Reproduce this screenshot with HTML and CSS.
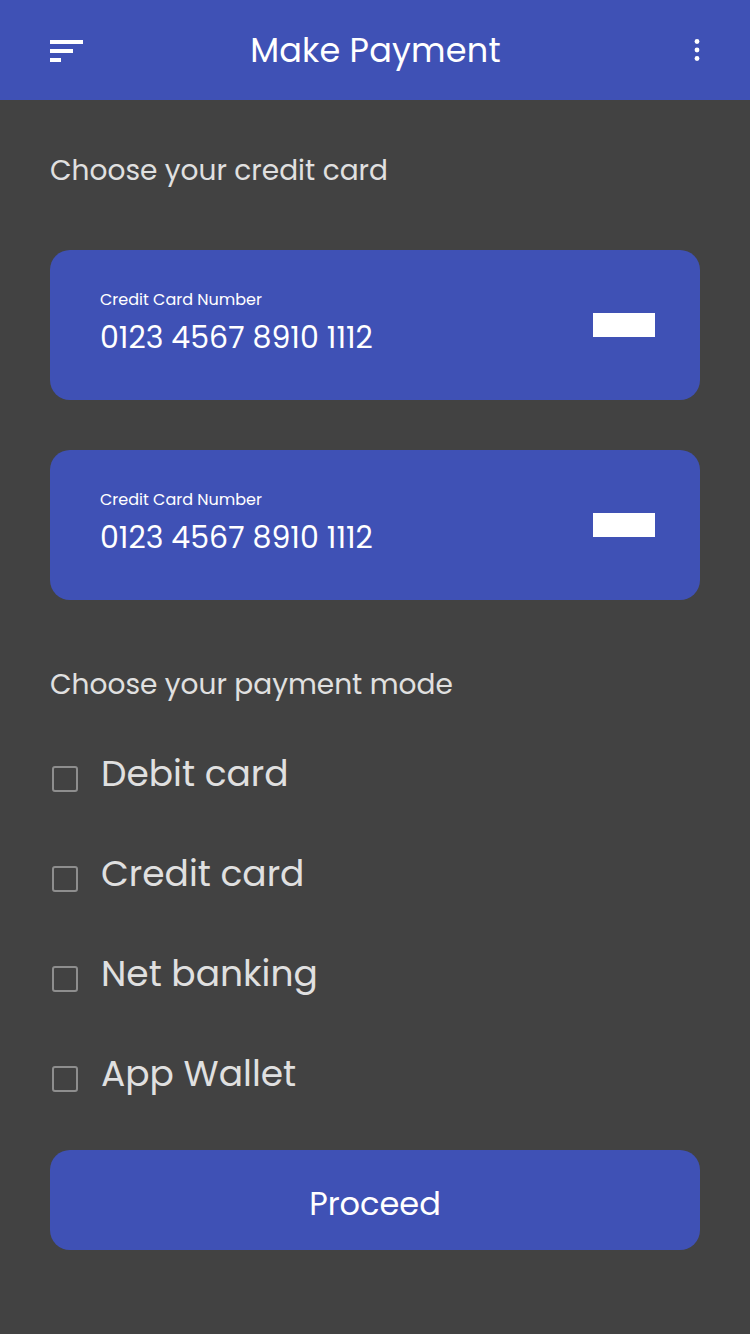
FILE: index.html
```html
<!DOCTYPE html>
<html>
<head>
<meta charset="utf-8">
<link rel="stylesheet" href="styles.css">
</head>
<body>
<header class="appbar">
  <div class="bar-left">
    <svg class="icon-menu" width="34" height="24" viewBox="0 0 34 24">
      <rect x="0" y="2" width="33" height="4" fill="#fff"/>
      <rect x="0" y="11" width="23" height="4" fill="#fff"/>
      <rect x="0" y="20" width="11" height="4" fill="#fff"/>
    </svg>
  </div>
  <h1 class="title">Make Payment</h1>
  <div class="bar-right">
    <svg class="icon-more" width="8" height="24" viewBox="0 0 8 24">
      <circle cx="4" cy="3.5" r="2.4" fill="#fff"/>
      <circle cx="4" cy="12" r="2.4" fill="#fff"/>
      <circle cx="4" cy="20.5" r="2.4" fill="#fff"/>
    </svg>
  </div>
</header>
<main class="content">
  <h2 class="section-title first">Choose your credit card</h2>
  <div class="card">
    <div class="card-info">
      <div class="card-label">Credit Card Number</div>
      <div class="card-number">0123 4567 8910 1112</div>
    </div>
    <div class="chip"></div>
  </div>
  <div class="card">
    <div class="card-info">
      <div class="card-label">Credit Card Number</div>
      <div class="card-number">0123 4567 8910 1112</div>
    </div>
    <div class="chip"></div>
  </div>
  <h2 class="section-title second">Choose your payment mode</h2>
  <ul class="modes">
    <li class="mode"><span class="box"></span><span class="mode-label">Debit card</span></li>
    <li class="mode"><span class="box"></span><span class="mode-label">Credit card</span></li>
    <li class="mode"><span class="box"></span><span class="mode-label">Net banking</span></li>
    <li class="mode"><span class="box"></span><span class="mode-label">App Wallet</span></li>
  </ul>
  <button class="proceed">Proceed</button>
</main>
</body>
</html>
```
FILE: styles.css
```css
* { box-sizing: border-box; }
html, body {
  margin: 0;
  padding: 0;
}
body {
  width: 750px;
  height: 1334px;
  background: #424242;
  font-family: "Poppins", "Open Sans", "DejaVu Sans", sans-serif;
  overflow: hidden;
}
.appbar {
  height: 100px;
  background: #3f51b5;
  display: grid;
  grid-template-columns: 1fr auto 1fr;
  align-items: center;
  padding: 0 49px 0 50px;
}
.bar-left { display: flex; justify-content: flex-start; }
.bar-right { display: flex; justify-content: flex-end; }
.icon-menu, .icon-more { display: block; }
.title {
  margin: 0;
  color: #fff;
  font-weight: 400;
  font-size: 33.5px;
  line-height: 40px;
  letter-spacing: 0.2px;
  padding-top: 2px;
}
.content {
  padding: 0 50px;
}
.section-title {
  margin: 0;
  color: #e0e0e0;
  font-weight: 400;
  font-size: 28px;
  line-height: 40px;
}
.section-title.first { padding-top: 51px; margin-bottom: 59px; }
.section-title.second { margin-top: 65px; margin-bottom: 19px; }
.card {
  height: 150px;
  background: #3f51b5;
  border-radius: 20px;
  display: flex;
  align-items: center;
  justify-content: space-between;
  padding: 0 45px 0 50px;
}
.card + .card { margin-top: 50px; }
.card-info { color: #fff; }
.card-label {
  font-size: 16px;
  line-height: 20px;
  margin-top: -4px;
}
.card-number {
  font-size: 30px;
  line-height: 36px;
  margin-top: 10px;
}
.chip {
  width: 62px;
  height: 24px;
  background: #fff;
}
.modes {
  list-style: none;
  margin: 0;
  padding: 0;
}
.mode {
  height: 100px;
  display: flex;
  align-items: center;
}
.box {
  width: 26px;
  height: 26px;
  border: 2px solid #8e8e8e;
  border-radius: 3px;
  margin: 10px 23px 0 2px;
  flex: none;
}
.mode-label {
  color: #e0e0e0;
  font-size: 36px;
  line-height: 44px;
}
.proceed {
  display: block;
  width: 100%;
  height: 100px;
  margin-top: 26px;
  border: none;
  border-radius: 20px;
  background: #3f51b5;
  color: #fff;
  font-family: inherit;
  font-size: 32px;
  padding-top: 8px;
}
```
